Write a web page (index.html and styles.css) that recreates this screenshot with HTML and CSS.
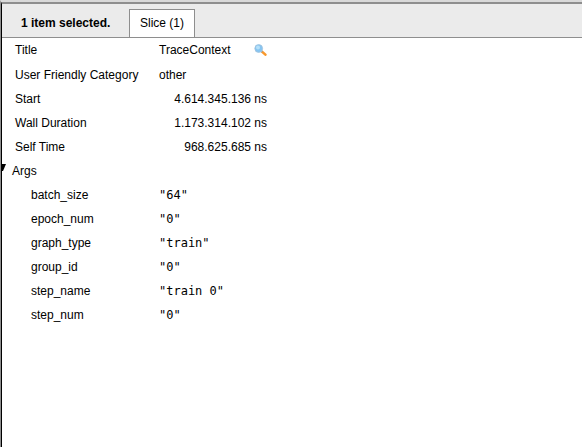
FILE: index.html
```html
<!DOCTYPE html>
<html lang="en">
<head>
<meta charset="utf-8">
<title>Trace selection</title>
<link rel="stylesheet" href="styles.css">
</head>
<body>
<main class="panel">
  <header class="bar">
    <span class="label">1 item selected.</span>
    <div role="tablist"><button class="tab" type="button" role="tab" aria-selected="true">Slice (1)</button></div>
  </header>
  <table class="details">
    <colgroup><col class="names"><col class="values"><col></colgroup>
    <tbody>
      <tr class="title-row"><th scope="row">Title</th><td><div class="title">TraceContext
        <a href="#search" class="search" aria-label="Search"><svg viewBox="0 0 13 12" width="13" height="12" aria-hidden="true"><path d="M8 7.6l3.4 3" stroke="#f8982c" stroke-width="2.6" stroke-linecap="round"/><path d="M7.2 7l1 .9" stroke="#8b98a8" stroke-width="1.6"/><circle cx="4.7" cy="4.5" r="3.9" fill="#86c5f2" stroke="#a3c3dc" stroke-width=".8"/><circle cx="4" cy="3.4" r="2" fill="#b5e1fa"/></svg></a></div></td><td></td></tr>
      <tr><th scope="row">User Friendly Category</th><td>other</td><td></td></tr>
      <tr><th scope="row">Start</th><td class="number">4.614.345.136 ns</td><td></td></tr>
      <tr><th scope="row">Wall Duration</th><td class="number">1.173.314.102 ns</td><td></td></tr>
      <tr><th scope="row">Self Time</th><td class="number">968.625.685 ns</td><td></td></tr>
    </tbody>
    <tbody class="args">
      <tr class="group"><th scope="rowgroup" colspan="3"><div class="group-name"><svg class="arrow" viewBox="0 0 5 7" width="5" height="7" aria-hidden="true"><path d="M0 0h4L1 7H0z"/></svg>Args</div></th></tr>
      <tr><th scope="row">batch_size</th><td class="code">"64"</td><td></td></tr>
      <tr><th scope="row">epoch_num</th><td class="code">"0"</td><td></td></tr>
      <tr><th scope="row">graph_type</th><td class="code">"train"</td><td></td></tr>
      <tr><th scope="row">group_id</th><td class="code">"0"</td><td></td></tr>
      <tr><th scope="row">step_name</th><td class="code">"train 0"</td><td></td></tr>
      <tr><th scope="row">step_num</th><td class="code">"0"</td><td></td></tr>
    </tbody>
  </table>
</main>
</body>
</html>
```
FILE: styles.css
```css
* {
  box-sizing: border-box;
}

body {
  margin: 0;
  min-height: 100vh;
  display: flex;
  flex-direction: column;
  border-top: 2px solid #d9d9d9;
  border-left: 1px solid #8e8e8e;
  background: #fff;
  color: #000;
  font: 12px/16px "Liberation Sans", Arial, sans-serif;
}

.panel {
  flex: 1;
  border-top: 2px solid #8e8e8e;
  border-left: 1px solid #000;
}

.bar {
  display: flex;
  align-items: flex-end;
  height: 34px;
  padding-left: 19px;
  border-bottom: 1px solid #8e8e8e;
  background: #ebebeb;
}

.label {
  width: 108px;
  padding-bottom: 6px;
  font-weight: bold;
  white-space: nowrap;
}

.tab {
  display: block;
  padding: 5px 10px 6px;
  border: 1px solid #8e8e8e;
  border-bottom: 0;
  background: #fff;
  color: inherit;
  font: inherit;
}

.details {
  width: 100%;
  table-layout: fixed;
  border-collapse: collapse;
}

.names {
  width: 157px;
}

.values {
  width: 108px;
}

tr {
  height: 24px;
}

.title-row {
  height: 25px;
}

th,
td {
  padding: 4px 0;
  text-align: left;
  font-weight: normal;
  vertical-align: top;
  white-space: nowrap;
}

th {
  padding-left: 13px;
}

.args th {
  padding-left: 29px;
}

.args .group th {
  padding-left: 0;
}

.group-name {
  display: flex;
  gap: 5px;
}

.arrow {
  margin-top: 1px;
}

.title {
  display: flex;
  justify-content: space-between;
  align-items: center;
}

.search {
  display: flex;
}

.number {
  text-align: right;
}

.code {
  font-family: "DejaVu Sans Mono", monospace;
}
```
